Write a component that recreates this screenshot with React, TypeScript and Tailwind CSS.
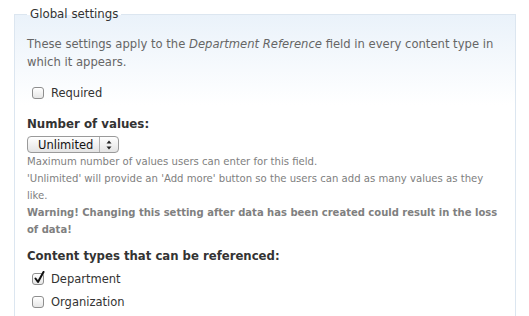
import React from "react";

function Box({ checked }: { checked?: boolean }) {
  return (
    <span className="relative inline-block w-[12px] h-[12px] rounded-[3px] border border-[#8e8e8e] bg-gradient-to-b from-[#ffffff] to-[#e6e6e6] shadow-[inset_0_1px_0_#fff] shrink-0">
      {checked && (
        <svg className="absolute left-[1px] top-[-3px]" width="11" height="13" viewBox="0 0 11 13">
          <path d="M1.5 7.5 L4 11 L9.5 1" fill="none" stroke="#111" strokeWidth="2" strokeLinecap="round" strokeLinejoin="round" />
        </svg>
      )}
    </span>
  );
}

function Check({ label, checked }: { label: string; checked?: boolean }) {
  return (
    <label className="flex items-center gap-[7px] pl-[5px] text-[11.5px] text-[#333] leading-[18px]">
      <Box checked={checked} />
      <span>{label}</span>
    </label>
  );
}

export default function App() {
  return (
    <div className="bg-white w-[529px] h-[316px] overflow-hidden pt-[5px] pl-[14px]" style={{ fontFamily: '"DejaVu Sans", Verdana, sans-serif' }}>
      <fieldset className="w-[502px] border border-[#dce6f0] bg-gradient-to-b from-[#eaf2fa] to-[#ffffff] to-[90px] pl-[12px] pr-[12px] pb-[40px]">
        <legend className="px-[3px] text-[11.8px] leading-[18px] text-[#333]">Global settings</legend>
        <p className="mt-[12px] text-[11.6px] leading-[18px] text-[#666]">
          These settings apply to the <span className="italic">Department Reference</span> field in every content type in which it appears.
        </p>
        <div className="mt-[13px]">
          <Check label="Required" />
        </div>
        <div className="mt-[13px]">
          <div className="text-[11.8px] font-bold leading-[18px] text-[#333]">Number of values:</div>
          <div className="mt-[3px] flex items-center w-[92px] h-[17px] rounded-[4px] border border-[#9a9a9a] bg-gradient-to-b from-[#ffffff] to-[#e4e4e4] text-[11.5px] leading-[14px] text-[#111]">
            <span className="flex-1 pl-[10px]">Unlimited</span>
            <span className="w-[19px] h-full border-l border-[#b0b0b0] flex items-center justify-center">
              <svg width="6" height="10" viewBox="0 0 6 10">
                <path d="M3 0.5 L5.5 3.5 L0.5 3.5 Z" fill="#222" />
                <path d="M3 9.5 L5.5 6.5 L0.5 6.5 Z" fill="#222" />
              </svg>
            </span>
          </div>
          <div className="mt-[0px] text-[10.1px] leading-[17px] text-[#808080]">
            Maximum number of values users can enter for this field.
            <br />
            'Unlimited' will provide an 'Add more' button so the users can add as many values as they like.
            <br />
            <strong className="text-[10px] text-[#808080]">Warning! Changing this setting after data has been created could result in the loss of data!</strong>
          </div>
        </div>
        <div className="mt-[9px]">
          <div className="text-[11.7px] font-bold leading-[18px] text-[#333]">Content types that can be referenced:</div>
          <div className="mt-[5px] flex flex-col gap-[5px]">
            <Check label="Department" checked />
            <Check label="Organization" />
          </div>
        </div>
      </fieldset>
    </div>
  );
}
